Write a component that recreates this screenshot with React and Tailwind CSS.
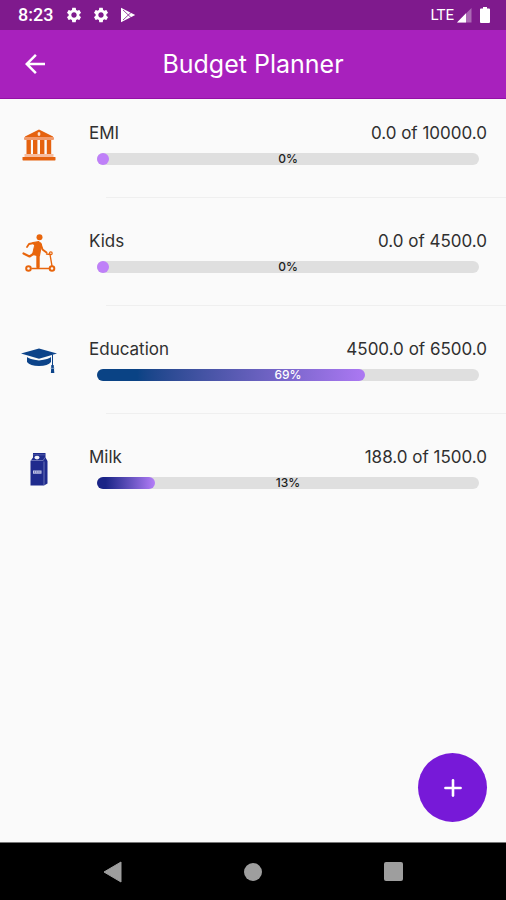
import { Plus } from 'lucide-react';
import { MdArrowBack, MdSettings } from 'react-icons/md';

function BankIcon() {
  return (
    <svg viewBox="0 0 34 34" className="h-[34px] w-[34px]" aria-hidden="true">
      <path d="M17 1.5 L31 8.5 V10 H3 V8.5 Z" fill="#e5620f" />
      <ellipse cx="17" cy="6" rx="1.4" ry="2" fill="#fde3d0" />
      <rect x="2" y="9" width="30" height="3" rx="1" fill="#f09a6c" />
      <g fill="#e5620f">
        <rect x="4.5" y="12" width="4.4" height="14" />
        <rect x="11" y="12" width="4.4" height="14" />
        <rect x="18" y="12" width="4.4" height="14" />
        <rect x="24.8" y="12" width="4.4" height="14" />
      </g>
      <rect x="2.5" y="26" width="29" height="3" fill="#f6bda0" />
      <rect x="0.5" y="29" width="33" height="3.4" rx="0.6" fill="#e5620f" />
    </svg>
  );
}

function ScooterIcon() {
  return (
    <svg viewBox="0 0 34 38" className="h-[38px] w-[34px]" aria-hidden="true" fill="none" stroke="#e8650c" strokeLinecap="round" strokeLinejoin="round">
      <circle cx="17.5" cy="3.2" r="3" fill="#e8650c" stroke="none" />
      <path d="M11 8.5 L17 7.5 L19.5 10.5 L17.5 22 L10.5 20.5 L12.5 12 Z" fill="#e8650c" strokeWidth="1" />
      <path d="M12 9 L7 10 L5 13" strokeWidth="1.8" />
      <path d="M18.5 9.5 L20.5 15.5 L24.5 18.5" strokeWidth="2" />
      <path d="M12 19.5 L7.5 22.5 L1.5 19.5" strokeWidth="2.2" />
      <path d="M16 19 V33" strokeWidth="3.4" />
      <path d="M24.5 20 L28.5 20.5 M28 20.5 L30 32" strokeWidth="1.4" />
      <circle cx="28.8" cy="19.3" r="1.4" strokeWidth="1.2" />
      <path d="M10 34.5 H27" strokeWidth="1.5" />
      <circle cx="6.5" cy="34.5" r="2.3" strokeWidth="2" />
      <circle cx="30" cy="34.5" r="2.3" strokeWidth="2" />
    </svg>
  );
}

function CapIcon() {
  return (
    <svg viewBox="0 0 36 26" className="h-[26px] w-9" aria-hidden="true" fill="#0c4389">
      <path d="M0 5.5 L18 0.5 L36 5.5 L18 10.8 Z" />
      <path d="M6 9 Q8 11 18 12.5 Q28 11 30 9 V14 Q27 18 18 18 Q9 18 6 14 Z" />
      <path d="M31.5 6.5 V18" stroke="#0c4389" strokeWidth="1" />
      <path d="M30.3 17 H32.7 L33.3 25 H29.9 Z" />
      <path d="M29.5 20.3 H33.5" stroke="#9fb6d3" strokeWidth="0.8" />
    </svg>
  );
}

function MilkIcon() {
  return (
    <svg viewBox="0 0 18 34" className="h-[34px] w-[18px]" aria-hidden="true">
      <path d="M3 1 H15.5 V5.5 L17.5 9 V31.5 L14 33.5 H0.5 V9 L3 5.5 Z" fill="#1f2b8d" />
      <path d="M2.8 2.8 H15.2" stroke="#6d76b8" strokeWidth="0.6" />
      <ellipse cx="7" cy="5.6" rx="2.6" ry="1.8" fill="#f3f4fb" />
      <path d="M0.8 8.5 H13.2 L15 5.5 M14 9.5 V33" stroke="#8890c8" strokeWidth="0.7" fill="none" />
      <rect x="3" y="18.5" width="8.5" height="3.2" fill="#c3c7e6" />
      <path d="M4 20 H10.5" stroke="#3d479f" strokeWidth="1" strokeDasharray="1 0.8" />
    </svg>
  );
}

const budgets = [
  { name: 'EMI', spent: 0, total: 10000, icon: BankIcon, bar: 'bg-[#bf80f8]' },
  { name: 'Kids', spent: 0, total: 4500, icon: ScooterIcon, bar: 'bg-[#bf80f8]' },
  { name: 'Education', spent: 4500, total: 6500, icon: CapIcon, bar: 'bg-linear-to-r from-[#0a4385] from-15% to-[#ac78f3]' },
  { name: 'Milk', spent: 188, total: 1500, icon: MilkIcon, bar: 'bg-linear-to-r from-[#1a2487] from-15% to-[#b47df8]' },
];

function StatusBar() {
  return (
    <div className="flex h-[30px] items-center justify-between bg-[#7f1a8d] pr-4 pl-[18px] text-white">
      <div className="flex items-center">
        <span className="font-['Roboto',sans-serif] text-[18px] leading-6 font-medium">8:23</span>
        <MdSettings className="ml-3 h-[18px] w-[18px]" />
        <MdSettings className="ml-[9px] h-[18px] w-[18px]" />
        <svg viewBox="0 0 16 16" className="ml-[10px] h-4 w-4" aria-hidden="true">
          <path d="M1 0.8 L15.2 8 L1 15.2 Z" fill="#fff" />
          <path d="M3 3 L11.5 11 M3 13 L11.5 5" stroke="#7f1a8d" strokeWidth="0.8" />
        </svg>
      </div>
      <div className="flex items-center">
        <span className="font-['Roboto',sans-serif] text-[15px] leading-6">LTE</span>
        <svg viewBox="0 0 16 16" className="ml-[2px] h-4 w-4" aria-hidden="true">
          <path d="M15.5 1 V15.5 H1 Z" fill="#fff" fillOpacity="0.35" />
          <path d="M10 6.2 V15.5 H1 Z" fill="#fff" />
        </svg>
        <svg viewBox="0 0 10 16" className="ml-2 h-4 w-[10px]" aria-hidden="true">
          <path d="M3 0 H7 V1.5 H9 Q10 1.5 10 2.5 V15 Q10 16 9 16 H1 Q0 16 0 15 V2.5 Q0 1.5 1 1.5 H3 Z" fill="#fff" />
        </svg>
      </div>
    </div>
  );
}

function BudgetRow({ item }) {
  const Icon = item.icon;
  const ratio = item.spent / item.total;
  const percent = Math.round(ratio * 100);

  return (
    <li className="group flex pt-[31px] first:pt-[22px]">
      <div className="flex h-12 w-[78px] shrink-0 items-center justify-center">
        <Icon />
      </div>
      <div className="min-w-0 flex-1 pl-[11px]">
        <div className="flex justify-between pr-[19px] text-[17px] leading-6 text-[#303030]">
          <span>{item.name}</span>
          <span>{item.spent.toFixed(1)} of {item.total.toFixed(1)}</span>
        </div>
        <div
          role="progressbar"
          aria-label={item.name}
          aria-valuenow={percent}
          className="relative mt-2 mr-[27px] ml-2 h-3 rounded-full bg-[#dfdfdf]"
        >
          <div
            className={'h-3 rounded-full ' + item.bar}
            style={{ width: `calc(12px + (100% - 12px) * ${ratio})` }}
          />
          <span
            className={
              'absolute inset-0 text-center text-[12px] leading-3 font-medium ' +
              (percent > 50 ? 'text-white' : 'text-[#222222]')
            }
          >
            {percent}%
          </span>
        </div>
        <div className="mt-8 ml-[17px] h-px bg-[#efefef] group-last:hidden" />
      </div>
    </li>
  );
}

export default function App() {
  return (
    <div className="flex min-h-screen flex-col bg-[#fafafa] font-['Inter',sans-serif]">
      <StatusBar />
      <header className="grid h-[69px] grid-cols-[70px_1fr_70px] items-center border-b border-[#9410a6] bg-[#a821bd] text-white">
        <button type="button" aria-label="Back" className="flex justify-center">
          <MdArrowBack className="h-[30px] w-[30px]" />
        </button>
        <h1 className="text-center text-[25px] leading-8">Budget Planner</h1>
      </header>

      <main className="relative flex-1">
        <ul>
          {budgets.map((item) => (
            <BudgetRow key={item.name} item={item} />
          ))}
        </ul>
        <button
          type="button"
          aria-label="Add budget"
          className="absolute right-[19px] bottom-5 flex h-[69px] w-[69px] items-center justify-center rounded-full bg-[#7719d8] text-white"
        >
          <Plus className="h-[26px] w-[26px]" strokeWidth={2.4} />
        </button>
      </main>

      <nav className="flex h-[58px] items-center justify-around border-t border-[#777777] bg-black px-[42px]">
        <button type="button" aria-label="Back">
          <svg viewBox="0 0 20 22" className="h-[22px] w-5" aria-hidden="true">
            <path d="M1 11 L18 1 V21 Z" fill="#9e9e9e" stroke="#9e9e9e" strokeLinejoin="round" />
          </svg>
        </button>
        <button type="button" aria-label="Home" className="h-[18px] w-[18px] rounded-full bg-[#9e9e9e]" />
        <button type="button" aria-label="Recent apps" className="h-[19px] w-[19px] rounded-xs bg-[#9e9e9e]" />
      </nav>
    </div>
  );
}
